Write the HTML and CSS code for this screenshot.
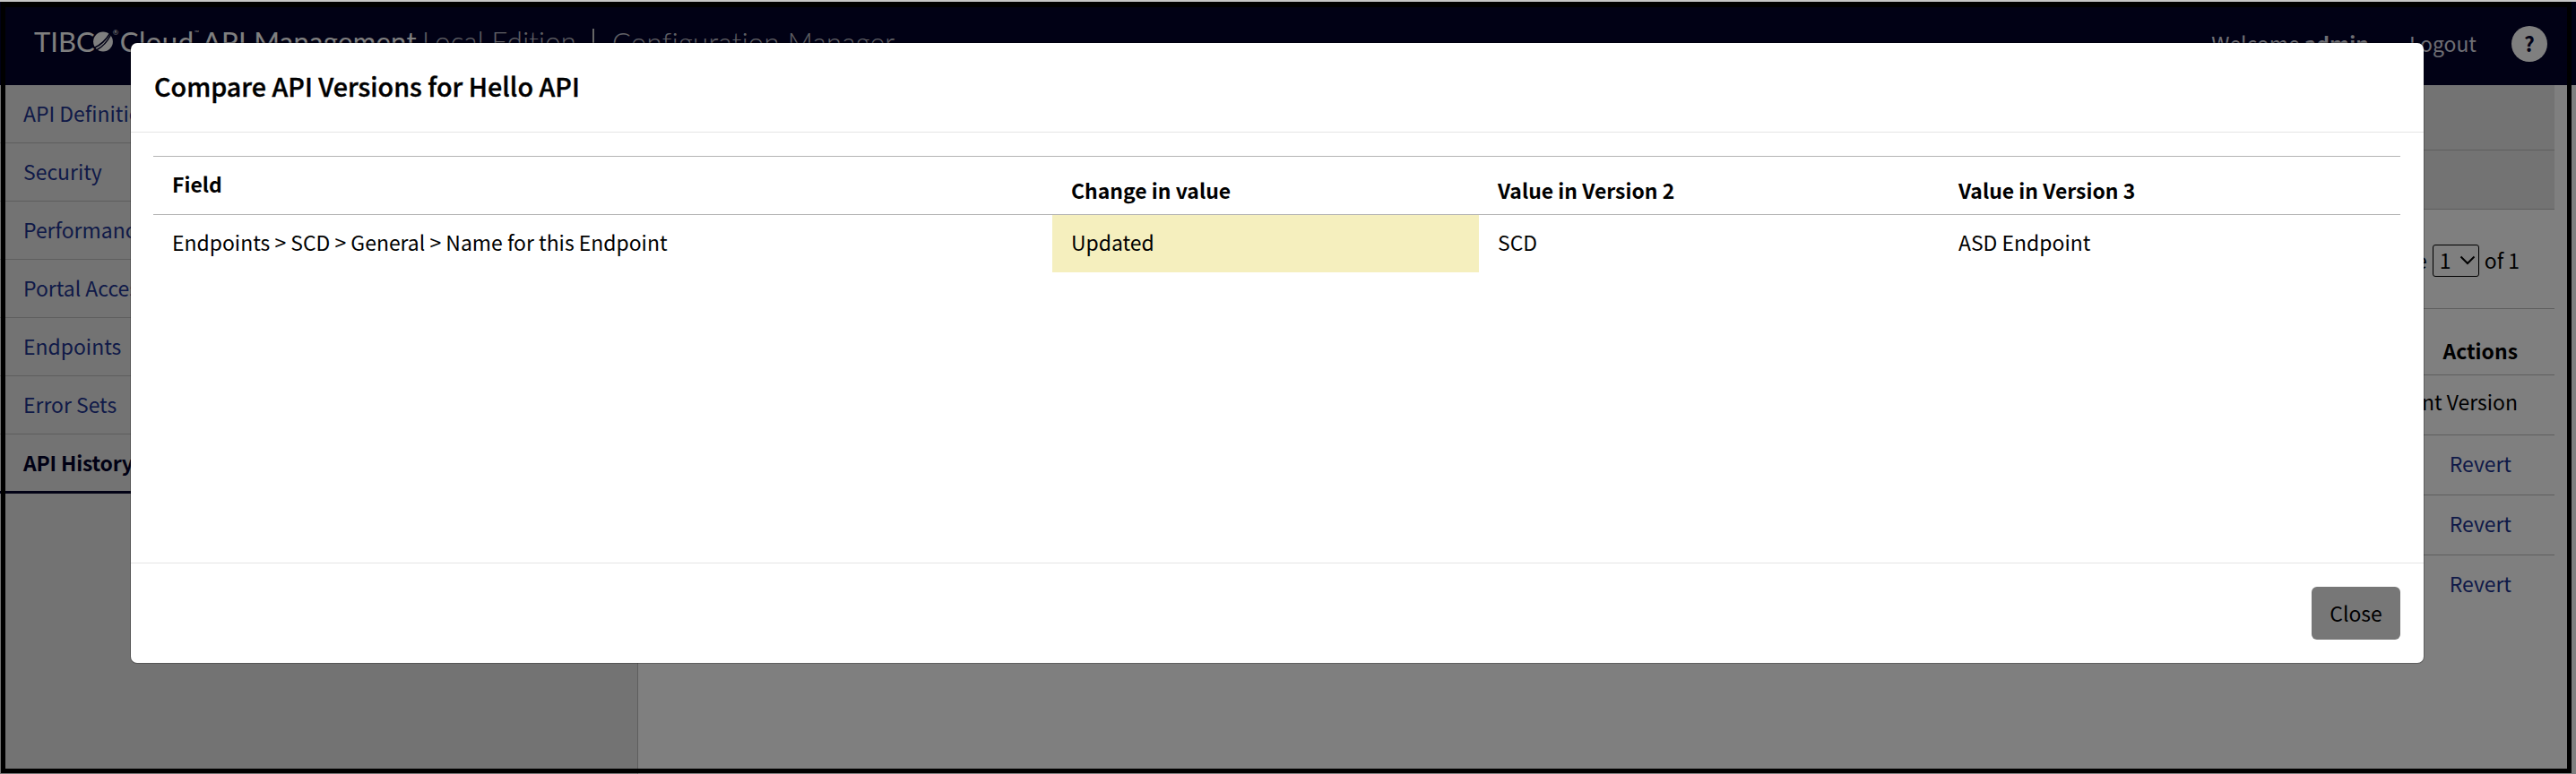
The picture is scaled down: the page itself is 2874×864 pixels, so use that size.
FILE: index.html
```html
<!DOCTYPE html>
<html lang="en">
<head>
<meta charset="utf-8">
<title>Compare API Versions</title>
<link rel="stylesheet" href="styles.css">
</head>
<body>
<div class="page">
  <header class="topbar">
    <div class="brand">
      <span class="brand-tibco">TIBC</span>
      <svg class="brand-mark" viewBox="0 0 22 23" width="22" height="23">
        <circle cx="11" cy="11.5" r="10.9" fill="#fff"/>
        <path d="M1 18.500C9 15 14 10 18.500 2.500M3.500 21C11 17 16 11 19.500 4" fill="none" stroke="#02022a" stroke-width="1.500"/>
      </svg>
      <span class="brand-reg">®</span>
      <span class="brand-cloud">Cloud</span>
      <span class="brand-tm">™</span>
      <span class="brand-api">API Management</span>
      <span class="brand-local">Local Edition</span>
      <span class="brand-sep"></span>
      <span class="brand-config">Configuration Manager</span>
    </div>
    <div class="user">
      <span class="welcome">Welcome <b>admin</b></span>
      <span class="logout">Logout</span>
      <span class="help">?</span>
    </div>
  </header>
  <div class="body">
    <nav class="sidebar">
      <a class="nav-item">API Definition</a>
      <a class="nav-item">Security</a>
      <a class="nav-item">Performance</a>
      <a class="nav-item">Portal Access</a>
      <a class="nav-item">Endpoints</a>
      <a class="nav-item">Error Sets</a>
      <a class="nav-item active">API History</a>
    </nav>
    <main class="content">
      <div class="band band-first"></div>
      <div class="band band-second"></div>
      <div class="pager"><span>Page</span>
        <span class="select">1<svg width="18" height="11" viewBox="0 0 18 11"><path d="M1.500 1.500L9 9l7.500-7.500" fill="none" stroke="#000" stroke-width="2"/></svg></span>
        <span>of 1</span></div>
      <div class="row head">Actions</div>
      <div class="row current">Current Version</div>
      <div class="row link">Revert</div>
      <div class="row link">Revert</div>
      <div class="row link last">Revert</div>
    </main>
  </div>
</div>
<div class="backdrop">
  <section class="modal">
    <h1 class="modal-title">Compare API Versions for Hello API</h1>
    <div class="modal-body">
      <div class="grid grid-head">
        <div class="cell cell-field">Field</div>
        <div class="cell">Change in value</div>
        <div class="cell">Value in Version 2</div>
        <div class="cell">Value in Version 3</div>
      </div>
      <div class="grid grid-row">
        <div class="cell">Endpoints &gt; SCD &gt; General &gt; Name for this Endpoint</div>
        <div class="cell updated">Updated</div>
        <div class="cell">SCD</div>
        <div class="cell">ASD Endpoint</div>
      </div>
    </div>
    <footer class="modal-footer"><button class="close">Close</button></footer>
  </section>
</div>
<div class="frame"></div>
</body>
</html>
```
FILE: styles.css
```css
* { box-sizing: border-box; }
body {
  margin: 0;
  width: 2874px;
  height: 864px;
  overflow: hidden;
  background: #c6c6c6;
  font-family: "Noto Sans CJK SC", "Noto Sans", sans-serif;
  font-size: 22.950px;
  line-height: 34px;
  color: #000;
  white-space: nowrap;
}
.page { margin-top: 2px; height: 862px; background: #fff; display: flex; flex-direction: column; }
.topbar { height: 93px; background: #02022a; display: flex; justify-content: space-between; padding-right: 32px; flex: none; }
.brand { display: flex; align-items: flex-start; padding: 27px 0 0 38px; color: #fff; font-family: Lato, sans-serif; font-size: 31px; }
.brand-mark { margin: 6px 0 0 -2px; }
.brand-reg { font-size: 8px; line-height: 14px; width: 8px; }
.brand-cloud { width: 83px; letter-spacing: 0.5px; }
.brand-tm { font-size: 7px; line-height: 14px; width: 9px; }
.brand-api { letter-spacing: 0.3px; }
.brand-local { font-weight: 300; margin-left: 6px; letter-spacing: 0.2px; opacity: .75; }
.brand-config { font-weight: 300; font-size: 31px; letter-spacing: 0.35px; padding-top: 1px; opacity: .75; }
.brand-sep { width: 2px; height: 34px; margin: 3px 20px 0 18px; background: #ccc; }
.user { display: flex; align-items: center; color: #dcdce6; }
.welcome, .logout { padding-bottom: 2px; }
.logout { margin-left: 45px; }
.help { margin: 1px 0 0 39px; width: 40px; height: 40px; border-radius: 50%; background: #fff; color: #02022a; font-weight: 700; text-align: center; line-height: 39px; }
.body { flex: 1; display: flex; }
.sidebar { width: 712px; background: #e6e6e6; border-right: 1px solid #bcbcbc; }
.nav-item { display: block; height: 65px; padding: 14px 0 0 26px; border-bottom: 1px solid #bcbcbc; color: #1e3490; }
.nav-item.active { color: #02022a; font-weight: 700; height: 66px; border-bottom: 3px solid #02022a; letter-spacing: -0.2px; }
.content { flex: 1; padding-right: 24px; }
.band { background: #e6e6e6; border-bottom: 1px solid #bcbcbc; }
.band-first { height: 73px; }
.band-second { height: 66px; }
.pager { height: 111px; padding: 2px 39px 0 0; display: flex; align-items: center; justify-content: flex-end; gap: 6px; border-bottom: 1px solid #bcbcbc; }
.select { display: flex; align-items: center; gap: 9px; width: 52px; height: 36px; margin-top: 2px; padding: 0 0 2px 7px; border: 1px solid #000; border-radius: 3px; }
.row { padding-right: 41px; text-align: right; border-bottom: 1px solid #bcbcbc; height: 67px; padding-top: 14px; }
.row.head { font-weight: 700; height: 74px; padding-top: 29px; }
.row.current { padding-top: 12px; }
.row.link { color: #1e3490; padding-right: 48px; }
.row.last { border-bottom: 0; }
.backdrop { position: absolute; inset: 2px 0 0 0; background: rgba(0,0,0,.5); padding: 46px 0 0 146px; }
.modal { width: 2558px; height: 692px; background: #fff; border-radius: 7px; box-shadow: 0 0 0 1px rgba(0,0,0,.25); display: flex; flex-direction: column; }
.modal-title { margin: 0; height: 100px; padding: 30px 26px 0; border-bottom: 1px solid #e5e5e5; font-size: 28.700px; font-weight: 500; line-height: 36px; -webkit-text-stroke: 0.4px #000; }
.modal-body { flex: 1; padding: 26px 26px 0 25px; }
.grid { display: grid; grid-template-columns: 1003px 476px 514px 1fr; }
.grid-head { height: 66px; border: 1px solid #b4b4b4; border-width: 1px 0; font-weight: 700; }
.grid-head .cell { padding-top: 20px; }
.grid-head .cell-field { padding-top: 13px; }
.cell { padding: 13px 0 0 21px; }
.grid-row { height: 64px; }
.updated { background: #f5efbe; }
.modal-footer { height: 112px; border-top: 1px solid #e5e5e5; display: flex; justify-content: flex-end; padding: 26px 26px 0 0; }
.close { width: 99px; height: 59px; border: 0; border-radius: 6px; background: #777; color: #000; font: inherit; padding: 0 0 2px; }
.frame { position: absolute; left: 1px; top: 2px; width: 2868px; height: 861px; border: 5px solid #000; border-top-width: 6px; }
```
